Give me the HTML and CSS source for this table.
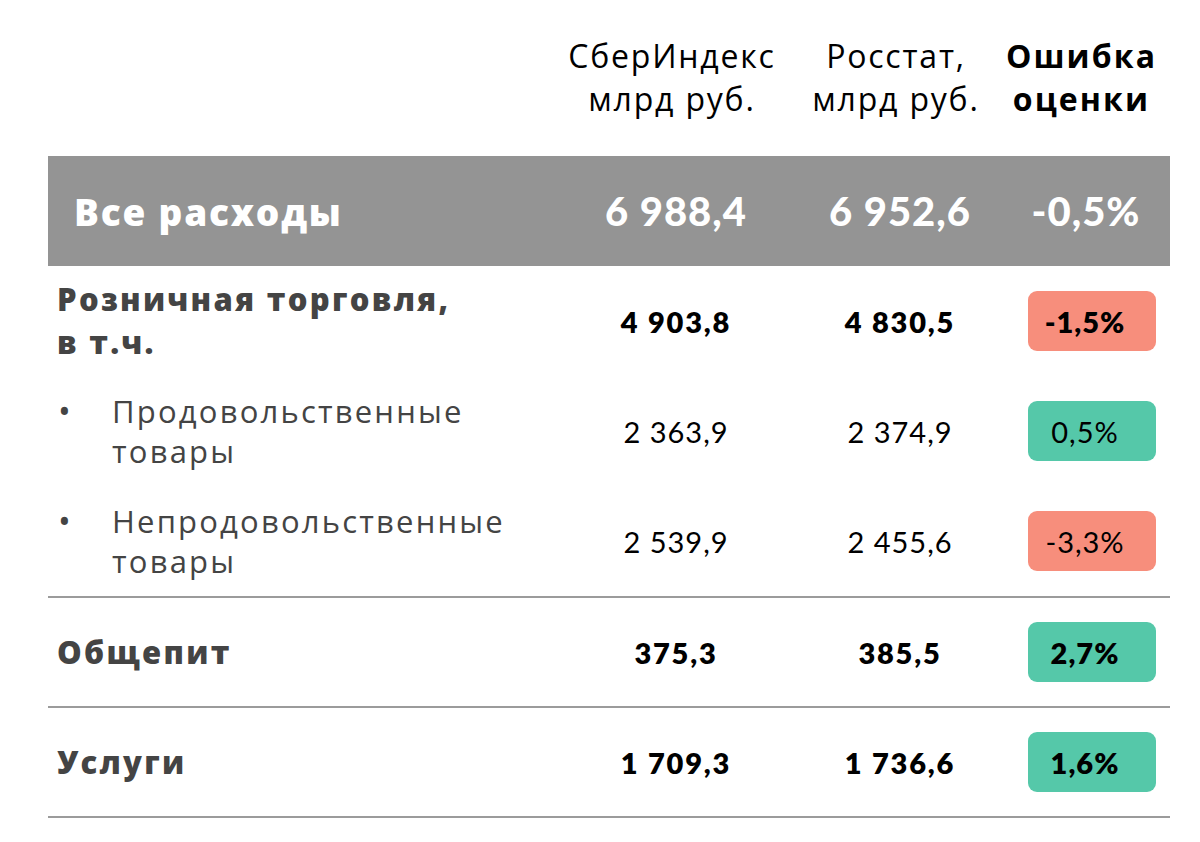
FILE: index.html
```html
<!DOCTYPE html>
<html lang="ru">
<head>
<meta charset="utf-8">
<link rel="stylesheet" href="styles.css">
</head>
<body>
<div class="table">
  <div class="head">
    <div class="hcell"></div>
    <div class="hcell c2">СберИндекс<br>млрд руб.</div>
    <div class="hcell c3">Росстат,<br>млрд руб.</div>
    <div class="hcell c4">Ошибка<br>оценки</div>
  </div>
  <div class="row total">
    <div class="label">Все расходы</div>
    <div class="num">6 988,4</div>
    <div class="num">6 952,6</div>
    <div class="num pct">-0,5%</div>
  </div>
  <div class="row">
    <div class="label bold">Розничная торговля,<br>в т.ч.</div>
    <div class="num bold">4 903,8</div>
    <div class="num bold">4 830,5</div>
    <div class="pcell"><span class="pill red bold">-1,5%</span></div>
  </div>
  <div class="row">
    <div class="label sub"><span class="dot">•</span><span>Продовольственные<br>товары</span></div>
    <div class="num">2 363,9</div>
    <div class="num">2 374,9</div>
    <div class="pcell"><span class="pill green">0,5%</span></div>
  </div>
  <div class="row">
    <div class="label sub"><span class="dot">•</span><span>Непродовольственные<br>товары</span></div>
    <div class="num">2 539,9</div>
    <div class="num">2 455,6</div>
    <div class="pcell"><span class="pill red">-3,3%</span></div>
  </div>
  <div class="row lined">
    <div class="label bold">Общепит</div>
    <div class="num bold">375,3</div>
    <div class="num bold">385,5</div>
    <div class="pcell"><span class="pill green bold">2,7%</span></div>
  </div>
  <div class="row lined last">
    <div class="label bold">Услуги</div>
    <div class="num bold">1 709,3</div>
    <div class="num bold">1 736,6</div>
    <div class="pcell"><span class="pill green bold">1,6%</span></div>
  </div>
</div>
</body>
</html>
```
FILE: styles.css
```css
* { box-sizing: border-box; }
html, body { margin: 0; padding: 0; background: #fff; }
body { width: 1200px; height: 842px; overflow: hidden; }

.table {
  margin-left: 48px;
  width: 1122px;
  padding-top: 34px;
}

.head, .row {
  display: grid;
  grid-template-columns: 532px 192px 256px 142px;
  align-items: center;
}

.head { height: 122px; align-items: start; }
.hcell {
  font-family: "Open Sans", "Noto Sans", sans-serif;
  font-size: 32px;
  line-height: 43px;
  letter-spacing: 1.8px;
  color: #000;
  text-align: center;
  white-space: nowrap;
}
.hcell.c2 { margin: 0 -26px 0 -34px; }
.hcell.c3 { margin: 0 -26px 0 -34px; }
.hcell.c4 { font-weight: 700; letter-spacing: 2.1px; margin: 0 -5px 0 -40px; }

.row { height: 110px; }
.row.lined { border-top: 2px solid #9b9b9b; }
.row.last { border-bottom: 2px solid #9b9b9b; height: 112px; }

.label {
  font-family: "Open Sans", "Noto Sans", sans-serif;
  font-size: 31px;
  line-height: 43px;
  letter-spacing: 2.3px;
  color: #444;
  padding-left: 9px;
}
.label.bold { font-weight: 800; }
.label.sub { display: flex; align-items: flex-start; line-height: 40px; letter-spacing: 2.2px; }
.dot { width: 55px; padding-left: 1px; font-size: 34px; line-height: 40px; }

.num {
  font-family: Lato, "Open Sans", sans-serif;
  font-size: 29px;
  letter-spacing: 1px;
  color: #000;
  text-align: center;
}
.num.bold { font-weight: 800; letter-spacing: 1.8px; }

.total { background: #949494; }
.total .label {
  color: #fff;
  font-weight: 800;
  font-size: 37px;
  letter-spacing: 1.8px;
  padding-left: 26px;
}
.total .num {
  color: #fff;
  font-weight: 900;
  font-size: 40px;
  letter-spacing: 1px;
}
.total .pct { padding-right: 26px; }

.pcell { display: flex; }
.pill {
  width: 128px;
  height: 60px;
  border-radius: 9px;
  display: flex;
  align-items: center;
  justify-content: center;
  font-family: Lato, "Open Sans", sans-serif;
  font-size: 29px;
  letter-spacing: 1px;
  color: #000;
  padding-right: 14px;
}
.pill.bold { font-weight: 800; letter-spacing: 1px; }
.red { background: #f78e7c; }
.green { background: #55c8a9; }
```
